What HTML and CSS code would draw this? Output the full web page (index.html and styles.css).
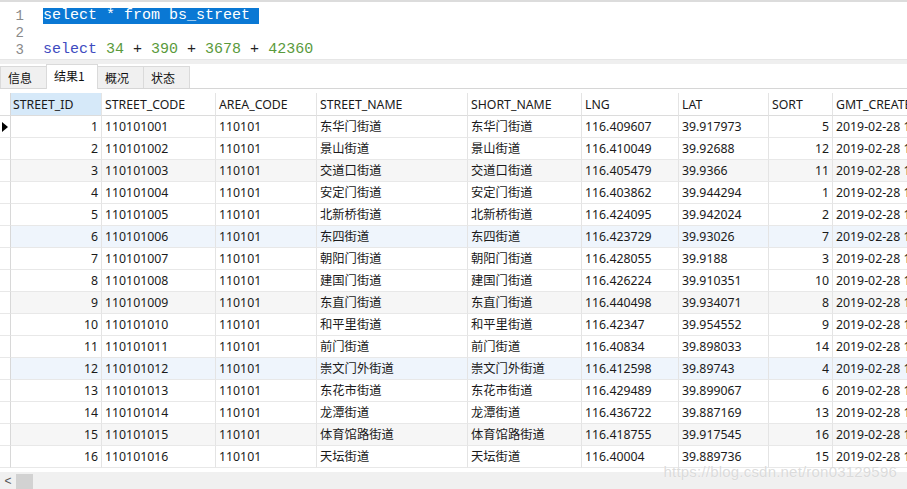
FILE: index.html
```html
<!DOCTYPE html>
<html>
<head>
<meta charset="utf-8">
<link rel="stylesheet" href="styles.css">
</head>
<body>
<div class="editor">
  <div class="line"><span class="ln">1</span><span class="code"><span class="sel">select * from bs_street </span></span></div>
  <div class="line"><span class="ln">2</span><span class="code"></span></div>
  <div class="line"><span class="ln">3</span><span class="code"><span class="kw">select</span> <span class="num">34</span> + <span class="num">390</span> + <span class="num">3678</span> + <span class="num">42360</span></span></div>
</div>
<div class="split"></div>
<div class="tabs">
  <div class="tab">信息</div>
  <div class="tab active">结果1</div>
  <div class="tab">概况</div>
  <div class="tab">状态</div>
</div>
<div class="grid-wrap">
  <div class="grid-clip">
    <div class="grid" id="grid">
      <div class="row head">
        <div class="c ind"></div>
        <div class="c sorted">STREET_ID</div>
        <div class="c">STREET_CODE</div>
        <div class="c">AREA_CODE</div>
        <div class="c">STREET_NAME</div>
        <div class="c">SHORT_NAME</div>
        <div class="c">LNG</div>
        <div class="c">LAT</div>
        <div class="c">SORT</div>
        <div class="c">GMT_CREATE</div>
      </div>
    </div>
  </div>
  <div class="hscroll"><span class="arrow">&lt;</span><span class="thumb"></span></div>
  <div class="watermark">https://blog.csdn.net/ron03129596</div>
</div>
<script src="app.js"></script>
</body>
</html>
```

FILE: app.js
```js
const data = [
  [1,"东华门街道","116.409607","39.917973",5],
  [2,"景山街道","116.410049","39.92688",12],
  [3,"交道口街道","116.405479","39.9366",11],
  [4,"安定门街道","116.403862","39.944294",1],
  [5,"北新桥街道","116.424095","39.942024",2],
  [6,"东四街道","116.423729","39.93026",7],
  [7,"朝阳门街道","116.428055","39.9188",3],
  [8,"建国门街道","116.426224","39.910351",10],
  [9,"东直门街道","116.440498","39.934071",8],
  [10,"和平里街道","116.42347","39.954552",9],
  [11,"前门街道","116.40834","39.898033",14],
  [12,"崇文门外街道","116.412598","39.89743",4],
  [13,"东花市街道","116.429489","39.899067",6],
  [14,"龙潭街道","116.436722","39.887169",13],
  [15,"体育馆路街道","116.418755","39.917545",16],
  [16,"天坛街道","116.40004","39.889736",15]
];
const grid = document.getElementById('grid');
data.forEach(d => {
  const code = '110101' + String(d[0]).padStart(3, '0');
  const row = document.createElement('div');
  row.className = 'row';
  if (d[0] === 6 || d[0] === 12) row.classList.add('blue');
  else if (d[0] % 3 === 0) row.classList.add('grey');
  row.innerHTML =
    '<div class="c ind">' + (d[0] === 1 ? '<span class="cur"></span>' : '') + '</div>' +
    '<div class="c r">' + d[0] + '</div>' +
    '<div class="c">' + code + '</div>' +
    '<div class="c">110101</div>' +
    '<div class="c">' + d[1] + '</div>' +
    '<div class="c">' + d[1] + '</div>' +
    '<div class="c">' + d[2] + '</div>' +
    '<div class="c">' + d[3] + '</div>' +
    '<div class="c r">' + d[4] + '</div>' +
    '<div class="c">2019-02-28 10:00:00</div>';
  grid.appendChild(row);
});
```

FILE: styles.css
```css
html, body {
  margin: 0;
  padding: 0;
  background: #fff;
  overflow: hidden;
}
body {
  width: 907px;
  height: 489px;
  font-family: "Noto Sans", "Noto Sans CJK SC", sans-serif;
  color: #1a1a1a;
}
.editor {
  height: 59px;
  border-top: 2px solid #dcdcdc;
  padding-top: 6px;
  box-sizing: border-box;
  font-family: "Liberation Mono", monospace;
  font-size: 15px;
}
.line {
  display: flex;
  height: 17px;
  line-height: 16px;
}
.ln {
  width: 24px;
  text-align: right;
  color: #8a8a8a;
  font-size: 14px;
}
.code {
  margin-left: 19px;
  white-space: pre;
  color: #222;
}
.sel {
  background: #0a78d4;
  color: #fff;
  display: inline-block;
  height: 16px;
}
.kw { color: #3e4bbf; }
.num { color: #5a9a3c; }
.split {
  height: 4px;
  background: #efefef;
  border-top: 1px solid #e6e6e6;
}
.tabs {
  display: flex;
  height: 24px;
  align-items: flex-end;
  border-bottom: 1px solid #d6d6d6;
  padding-left: 0;
  font-size: 12px;
  font-family: "Noto Sans CJK SC", sans-serif;
}
.tab {
  height: 21px;
  line-height: 21px;
  padding: 0 7px;
  width: 31px;
  background: #f0f0f0;
  border: 1px solid #dadada;
  border-bottom: none;
  margin-right: -1px;
  color: #111;
}
.tab.active {
  height: 24px;
  line-height: 22px;
  background: #fff;
  width: 36px;
  margin-bottom: -1px;
  position: relative;
}
.grid-wrap {
  position: relative;
  padding-top: 4px;
  width: 907px;
}
.grid-clip {
  width: 907px;
  overflow: hidden;
}
.grid {
  width: 1100px;
  font-size: 12.3px;
}
.row {
  display: grid;
  grid-template-columns: 11px 91px 114px 101px 151px 114px 97px 90px 64px 150px;
  height: 22px;
  line-height: 22px;
}
.row.head { height: 23px; line-height: 23px; }
.row.grey .c:not(.ind) { background: #f6f6f6; }
.row.blue .c:not(.ind) { background: #eff5fc; }
.c {
  border-right: 1px solid #e4e4e4;
  border-bottom: 1px solid #e8e8e8;
  padding: 0 3px;
  white-space: nowrap;
  overflow: hidden;
}
.c.ind { padding: 0; position: relative; border-right-color: #d8d8d8; }
.c.r { text-align: right; }
.head .c { border-bottom-color: #dcdcdc; }
.head .c.sorted { background: #d6e9f9; padding-left: 2px; }
.cur {
  position: absolute;
  left: 2px;
  top: 6px;
  width: 0;
  height: 0;
  border-top: 5px solid transparent;
  border-bottom: 5px solid transparent;
  border-left: 6px solid #000;
}
.hscroll {
  margin-top: 4px;
  height: 17px;
  background: #f0f0f0;
  display: flex;
  align-items: flex-end;
}
.arrow {
  width: 16px;
  text-align: center;
  font-size: 12px;
  line-height: 15px;
  color: #555;
  font-family: "Liberation Sans", sans-serif;
}
.thumb {
  width: 17px;
  height: 15px;
  background: #d2d2d2;
}
.watermark {
  position: absolute;
  right: 10px;
  bottom: 9px;
  font-family: "Liberation Sans", sans-serif;
  font-size: 15px;
  color: rgba(190, 190, 190, 0.55);
  text-shadow: 0 0 1px rgba(255,255,255,0.9);
  letter-spacing: 0.2px;
}
```
